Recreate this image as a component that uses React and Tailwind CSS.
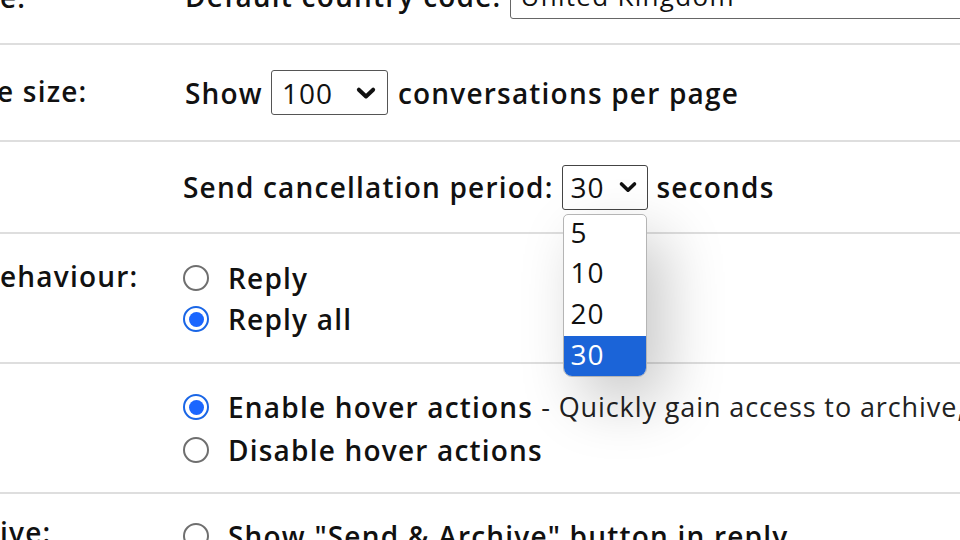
import React from "react";

function Chevron({ className = "" }) {
  return (
    <svg viewBox="0 0 20 20" className={className} fill="none">
      <path d="M3.5 7 L10 13.2 L16.5 7" stroke="#111" strokeWidth="3.6" strokeLinecap="round" strokeLinejoin="round" />
    </svg>
  );
}

function Radio({ checked }) {
  if (checked) {
    return (
      <span className="w-[26px] h-[26px] rounded-full border-[2px] border-[#1a66e6] flex items-center justify-center shrink-0">
        <span className="w-[15px] h-[15px] rounded-full bg-[#1a66ff]" />
      </span>
    );
  }
  return <span className="w-[26px] h-[26px] rounded-full border-[2px] border-[#6f6f6f] bg-white shrink-0" />;
}

function Divider() {
  return <div className="h-[2px] bg-[#dedede] w-full shrink-0" />;
}

function Row({ label, children, className = "" }) {
  return (
    <div className={"flex shrink-0 " + className}>
      <div className="w-[183px] shrink-0 font-semibold text-[28px] tracking-[1.2px] whitespace-nowrap">{label}</div>
      <div className="flex-1 min-w-0">{children}</div>
    </div>
  );
}

export default function App() {
  return (
    <div
      className="relative w-[960px] h-[540px] overflow-hidden bg-white text-[#111] text-[26px] leading-[32px]"
      style={{ fontFamily: '"Open Sans", "Noto Sans", sans-serif' }}
    >
      <div className="flex flex-col mt-[-27px]">
        {/* Top row */}
        <Row label={<span className="block mt-[8px]">e:</span>} className="h-[70px]">
          <div className="flex items-start whitespace-nowrap">
            <span className="font-semibold text-[28px] tracking-[1.2px] mt-[7px] pl-[2px]">Default country code:</span>
            <div className="ml-[9px] w-[500px] h-[46px] shrink-0 border-[1.5px] border-[#666] rounded-[3px] px-[9px] pt-[6px] font-normal tracking-[1.3px]">
              United Kingdom
            </div>
          </div>
        </Row>
        <Divider />

        {/* Page size */}
        <Row label={<span className="block mt-[30px] ml-[-3px]">e size:</span>} className="h-[95px]">
          <div className="flex items-center h-full pl-[2px] font-semibold text-[28px] tracking-[1.2px] whitespace-nowrap">
            <span>Show</span>
            <div className="ml-[8px] w-[117px] h-[45px] shrink-0 border-[1.5px] border-[#555] rounded-[3px] flex items-center justify-between pl-[10px] pr-[10px] font-normal tracking-[1px]">
              <span>100</span>
              <Chevron className="w-[22px] h-[22px]" />
            </div>
            <span className="ml-[10px]">conversations per page</span>
          </div>
        </Row>
        <Divider />

        {/* Send cancellation */}
        <Row label="" className="h-[90px]">
          <div className="flex items-center h-full font-semibold text-[28px] tracking-[1.2px] whitespace-nowrap">
            <span>Send cancellation period:</span>
            <div className="relative ml-[8px] shrink-0">
              <div className="w-[86px] h-[45px] border-[1.5px] border-[#444] rounded-[3px] flex items-center justify-between pl-[8px] pr-[9px] font-normal tracking-[1px]">
                <span>30</span>
                <Chevron className="w-[20px] h-[20px]" />
              </div>
              <div className="absolute z-10 left-[1px] top-[49px] w-[84px] bg-white border border-[#b5b5b5] rounded-t-[5px] rounded-b-[9px] shadow-[18px_24px_60px_rgba(0,0,0,0.22)] font-normal tracking-[1px]">
                <div className="h-[40px] pl-[7px] pb-[6px] flex items-center">5</div>
                <div className="h-[41px] pl-[7px] pb-[6px] flex items-center">10</div>
                <div className="h-[40px] pl-[7px] pb-[6px] flex items-center">20</div>
                <div className="h-[40px] pl-[7px] pb-[4px] flex items-center bg-[#1b64d8] text-white rounded-b-[8px]">30</div>
              </div>
            </div>
            <span className="ml-[9px]">seconds</span>
          </div>
        </Row>
        <Divider />

        {/* Reply behaviour */}
        <Row label={<span className="block mt-[26px]">ehaviour:</span>} className="h-[128px]">
          <div className="flex flex-col pt-[28px] gap-[9px] font-semibold text-[28px] tracking-[1.2px]">
            <div className="flex items-center">
              <Radio />
              <span className="ml-[19px]">Reply</span>
            </div>
            <div className="flex items-center">
              <Radio checked />
              <span className="ml-[19px]">Reply all</span>
            </div>
          </div>
        </Row>
        <Divider />

        {/* Hover actions */}
        <Row label="" className="h-[128px]">
          <div className="flex flex-col pt-[27px] gap-[11px]">
            <div className="flex items-center whitespace-nowrap">
              <Radio checked />
              <span className="ml-[19px] font-semibold text-[28px] tracking-[1.2px]">Enable hover actions</span>
              <span className="ml-[8px] text-[#222] text-[27px] tracking-[0.9px]">- Quickly gain access to archive, mark as read and snooze controls on hover.</span>
            </div>
            <div className="flex items-center">
              <Radio />
              <span className="ml-[19px] font-semibold text-[28px] tracking-[1.2px]">Disable hover actions</span>
            </div>
          </div>
        </Row>
        <Divider />

        {/* Send and archive */}
        <Row label={<span className="block mt-[22px]">ive:</span>} className="h-[100px]">
          <div className="flex items-center pt-[26px] font-semibold text-[28px] tracking-[1.2px] whitespace-nowrap">
            <Radio />
            <span className="ml-[19px]">Show "Send &amp; Archive" button in reply</span>
          </div>
        </Row>
      </div>
    </div>
  );
}
